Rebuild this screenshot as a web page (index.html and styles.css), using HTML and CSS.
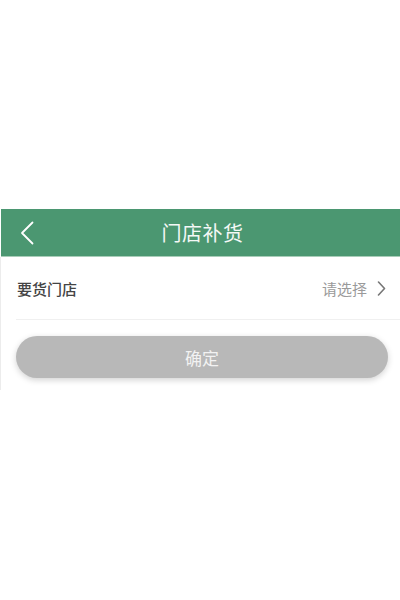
FILE: index.html
```html
<!DOCTYPE html>
<html lang="zh-CN">
<head>
    <meta charset="UTF-8">
    <meta name="viewport" content="width=device-width, initial-scale=1.0">
    <title>门店补货</title>
    <link rel="stylesheet" href="styles.css">
</head>
<body>

<div class="screen">
    <!-- Header bar -->
    <div class="header">
        <span class="back">
            <svg width="14" height="24" viewBox="0 0 14 24">
                <path d="M12.5 1.5 L2 12 L12.5 22.5" fill="none" stroke="#fff" stroke-width="1.8" stroke-linecap="round" stroke-linejoin="round"/>
            </svg>
        </span>
        <span class="title">门店补货</span>
    </div>

    <div class="panel">
        <div class="row">
            <span class="label">要货门店</span>
            <span class="value">请选择
                <svg width="9" height="15" viewBox="0 0 9 15">
                    <path d="M1.5 1 L7.5 7.5 L1.5 14" fill="none" stroke="#777" stroke-width="1.6" stroke-linecap="round" stroke-linejoin="round"/>
                </svg>
            </span>
        </div>

        <div class="actions">
            <button class="submit">确定</button>
        </div>
    </div>
</div>

</body>
</html>
```

FILE: styles.css
```css
body {
    margin: 0;
    background: #fff;
    font-family: "Noto Sans CJK SC", "Noto Sans", sans-serif;
}
.screen {
    margin-top: 209px;
    width: 399px;
    margin-left: 1px;
}
.header {
    height: 47px;
    background: #4b9771;
    border-bottom: 1px solid #a9cdb9;
    display: flex;
    align-items: center;
    justify-content: center;
    position: relative;
}
.back {
    position: absolute;
    left: 19px;
    top: 12px;
}
.title {
    color: #f4f8f6;
    font-size: 20px;
    letter-spacing: 0.5px;
    margin-left: 4px;
}
.panel {
    border-left: 1px solid #ececec;
    margin-left: -1px;
    height: 133px;
}
.row {
    margin-left: 15px;
    height: 62px;
    border-bottom: 1px solid #f0f0f0;
    display: flex;
    align-items: center;
    justify-content: space-between;
    padding-right: 14px;
}
.label {
    font-size: 15px;
    font-weight: 500;
    color: #444;
    margin-left: 1px;
}
.value {
    font-size: 15px;
    color: #9a9a9a;
    display: flex;
    align-items: center;
    gap: 10px;
}
.actions {
    padding: 16px 12px 0 15px;
}
.submit {
    width: 100%;
    height: 42px;
    border: none;
    border-radius: 21px;
    background: #b8b8b8;
    color: #f2f2f2;
    font-family: inherit;
    font-size: 17px;
    box-shadow: 0 2px 6px rgba(0, 0, 0, 0.18);
}
```
